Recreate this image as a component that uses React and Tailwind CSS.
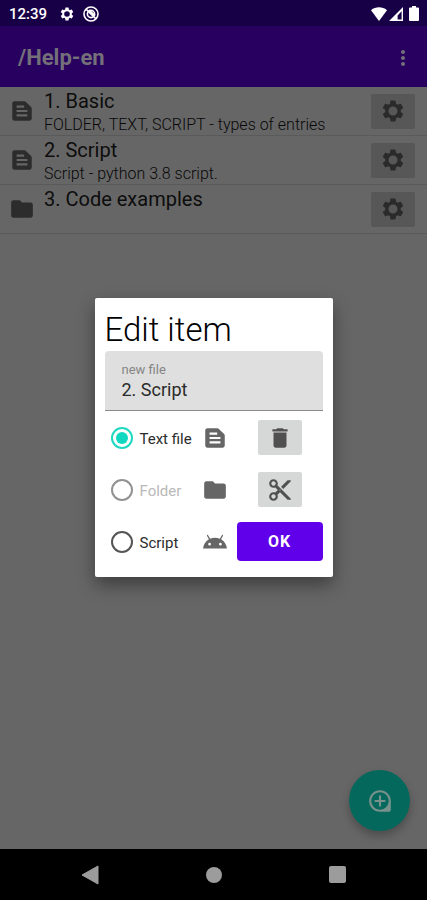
import React, { useState } from "react";
import {
  MdTextSnippet,
  MdFolder,
  MdDelete,
  MdContentCut,
  MdLoupe,
  MdMoreVert,
} from "react-icons/md";

function Gear({ className }) {
  return (
    <svg viewBox="0 0 24 24" fill="currentColor" fillRule="evenodd" className={className} aria-hidden="true">
      <path d="M19.14 12.94c.04-.3.06-.61.06-.94 0-.32-.02-.64-.07-.94l2.03-1.58a.49.49 0 0 0 .12-.61l-1.92-3.32a.488.488 0 0 0-.59-.22l-2.39.96c-.5-.38-1.03-.7-1.62-.94l-.36-2.54a.484.484 0 0 0-.48-.41h-3.84c-.24 0-.43.17-.47.41l-.36 2.54c-.59.24-1.13.57-1.62.94l-2.39-.96c-.22-.08-.47 0-.59.22L2.74 8.87c-.12.21-.08.47.12.61l2.03 1.58c-.05.3-.09.63-.09.94s.02.64.07.94l-2.03 1.58a.49.49 0 0 0-.12.61l1.92 3.32c.12.22.37.29.59.22l2.39-.96c.5.38 1.03.7 1.62.94l.36 2.54c.05.24.24.41.48.41h3.84c.24 0 .44-.17.47-.41l.36-2.54c.59-.24 1.13-.56 1.62-.94l2.39.96c.22.08.47 0 .59-.22l1.92-3.32c.12-.22.07-.47-.12-.61zM12 7.8a4.200 4.200 0 1 1 0 8.400 4.200 4.200 0 0 1 0-8.400z" />
    </svg>
  );
}

function AndroidHead({ className }) {
  return (
    <svg viewBox="0 0 24 24" fill="currentColor" className={className} aria-hidden="true">
      <path d="M17.6 9.48l1.84-3.18c.16-.31.04-.69-.26-.85-.29-.15-.65-.06-.83.22l-1.88 3.24c-2.86-1.21-6.08-1.21-8.94 0L5.65 5.67c-.19-.29-.58-.38-.87-.2-.28.18-.37.54-.22.83L6.4 9.48C3.3 11.25 1.28 14.44 1 18h22c-.28-3.56-2.3-6.75-5.4-8.52zM7 15.25a1.25 1.25 0 1 1 0-2.5 1.25 1.25 0 0 1 0 2.5zm10 0a1.25 1.25 0 1 1 0-2.5 1.25 1.25 0 0 1 0 2.5z" />
    </svg>
  );
}

function StatusBar() {
  return (
    <div className="flex h-[26px] shrink-0 items-center bg-[#180047] pr-2 pl-[9px] pt-px text-white">
      <span className="text-[15px] leading-6 font-medium">12:39</span>
      <Gear className="ml-3 size-4" />
      <svg viewBox="0 0 16 16" className="ml-2 size-4" fill="none" stroke="currentColor" aria-hidden="true">
        <circle cx="8" cy="8" r="7" strokeWidth="1.6" />
        <circle cx="8" cy="8" r="3.6" strokeWidth="1.6" />
        <path d="M3 3.2 13 12.8M6.2 4.2 12 9.6" strokeWidth="1.6" />
      </svg>
      <div className="ml-auto flex items-center gap-0.5">
        <svg viewBox="0 0 16 14" className="h-3.5 w-4" fill="currentColor" aria-hidden="true">
          <path d="M0 3.2C4.6-.6 11.4-.6 16 3.2L8 14z" />
        </svg>
        <svg viewBox="0 0 14 14" className="size-3.5" aria-hidden="true">
          <path fill="currentColor" fillRule="evenodd" d="M14 0v14H0zM12.6 4.2 8.6 8.400v4.200h4z" />
        </svg>
        <svg viewBox="0 0 10 15" className="ml-1 h-[15px] w-2.5" fill="currentColor" aria-hidden="true">
          <path d="M3 0h4v1.4h2q1 0 1 1V14q0 1-1 1H1q-1 0-1-1V2.400q0-1 1-1h2z" />
        </svg>
      </div>
    </div>
  );
}

const entries = [
  { title: "1. Basic", note: "FOLDER, TEXT, SCRIPT - types of entries", Icon: MdTextSnippet },
  { title: "2. Script", note: "Script - python 3.8 script.", Icon: MdTextSnippet },
  { title: "3. Code examples", note: "", Icon: MdFolder },
];

function Entry({ title, note, Icon }) {
  return (
    <li className="flex h-[49px] items-center border-b border-[#5a5a5a] pr-3 pl-[9px]">
      <Icon className="size-[26px] shrink-0 text-[#2c2c2c]" />
      <div className="ml-[9px] min-w-0 flex-1 self-stretch pt-0.5">
        <div className="text-xl leading-6 text-[#0d0d0d]">{title}</div>
        <div className="text-base leading-6 font-light text-[#080808]">{note}</div>
      </div>
      <button
        type="button"
        aria-label={"Settings for " + title}
        className="flex h-[35px] w-11 shrink-0 items-center justify-center rounded-xs bg-[#575757] text-[#2a2a2a]"
      >
        <Gear className="size-[26px]" />
      </button>
    </li>
  );
}

function Choice({ id, label, Icon, checked, disabled, onChange }) {
  return (
    <div className="flex items-center">
      <input
        id={id}
        type="radio"
        name="kind"
        checked={checked}
        disabled={disabled}
        onChange={onChange}
        className="flex size-[22px] shrink-0 appearance-none items-center justify-center rounded-full border-2 border-[#555555] before:size-3 before:rounded-full checked:border-[#1ed8c0] checked:before:bg-[#0fd8c0] disabled:border-[#929292]"
      />
      <label
        htmlFor={id}
        className={"ml-[7px] w-[62px] pt-0.5 text-[15px] leading-6 " + (disabled ? "text-[#b9b9b9]" : "text-[#2b2b2b]")}
      >
        {label}
      </label>
      <Icon className="size-[26px] shrink-0 text-[#666666]" />
    </div>
  );
}

function EditDialog() {
  const [name, setName] = useState("2. Script");
  const [kind, setKind] = useState("text");
  const tool =
    "flex h-[35px] w-11 items-center justify-center rounded-xs bg-[#d6d8d7] text-[#505050]";
  return (
    <div role="dialog" aria-labelledby="edit-title" className="w-[238px] rounded-xs bg-white px-2.5 pt-3 pb-[9px] shadow-[0_8px_18px_rgba(0,0,0,0.4)]">
      <h2 id="edit-title" className="text-[33px] leading-10 font-light text-black">Edit item</h2>
      <div className="mt-px h-[60px] rounded-t-sm border-b border-[#8b8b8b] bg-[#dfdfdf] px-[17px] pt-[11px]">
        <label htmlFor="entry-name" className="block text-[13px] leading-4 text-[#858585]">new file</label>
        <input
          id="entry-name"
          value={name}
          onChange={(e) => setName(e.target.value)}
          className="block w-full bg-transparent text-lg leading-6 text-[#2b2b2b] outline-none"
        />
      </div>
      <div className="grid grid-cols-[auto_1fr] pl-1.5">
        <div className="flex h-[53px] items-center">
          <Choice id="kind-text" label="Text file" Icon={MdTextSnippet} checked={kind === "text"} onChange={() => setKind("text")} />
        </div>
        <div className="flex items-center justify-center pl-[9px]">
          <button type="button" aria-label="Delete" className={tool}><MdDelete className="size-[26px]" /></button>
        </div>
        <div className="flex h-[51px] items-center">
          <Choice id="kind-folder" label="Folder" Icon={MdFolder} checked={false} disabled onChange={() => {}} />
        </div>
        <div className="flex items-center justify-center pl-[9px]">
          <button type="button" aria-label="Cut" className={tool}><MdContentCut className="size-[26px]" /></button>
        </div>
        <div className="flex h-[53px] items-center">
          <Choice id="kind-script" label="Script" Icon={AndroidHead} checked={kind === "script"} onChange={() => setKind("script")} />
        </div>
        <div className="flex items-center pl-[9px]">
          <button type="button" className="h-[39px] w-full rounded-sm bg-[#6000ea] text-base font-bold tracking-wider text-white">OK</button>
        </div>
      </div>
    </div>
  );
}

export default function App() {
  return (
    <div className="flex min-h-screen flex-col bg-[#666666] font-['Roboto',sans-serif]">
      <StatusBar />
      <div className="relative flex flex-1 flex-col">
        <header className="flex h-[61px] shrink-0 items-center justify-between bg-[#270060] pt-[3px] pr-3 pl-[18px] text-[#747079]">
          <h1 className="text-[22px] leading-8 font-bold">/Help-en</h1>
          <button type="button" aria-label="More options"><MdMoreVert className="size-6" /></button>
        </header>
        <ul>
          {entries.map((e) => (
            <Entry key={e.title} {...e} />
          ))}
        </ul>
        <button
          type="button"
          aria-label="Add entry"
          className="absolute right-[17px] bottom-[18px] flex size-[61px] items-center justify-center rounded-full bg-[#04695c] text-[#78918c] shadow-[0_5px_8px_rgba(0,0,0,0.25)]"
        >
          <MdLoupe className="size-[26px]" />
        </button>
        <div className="absolute inset-0 flex items-center justify-center">
          <EditDialog />
        </div>
      </div>
      <nav className="flex h-[51px] shrink-0 items-center justify-around bg-black px-7 text-[#9c9c9c]">
        <button type="button" aria-label="Back">
          <svg viewBox="0 0 18 20" className="h-5 w-[18px]" fill="currentColor"><path d="M17 1v18L1 10z" stroke="currentColor" strokeLinejoin="round" /></svg>
        </button>
        <button type="button" aria-label="Home" className="size-4 rounded-full bg-[#9c9c9c]" />
        <button type="button" aria-label="Recent apps" className="size-[17px] rounded-xs bg-[#9c9c9c]" />
      </nav>
    </div>
  );
}
